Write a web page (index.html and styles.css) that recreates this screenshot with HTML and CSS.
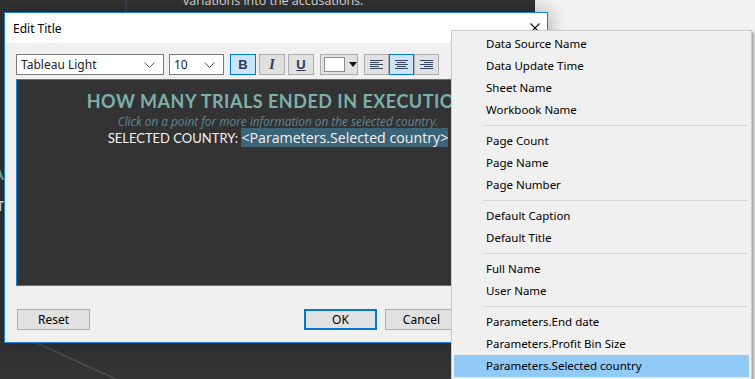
FILE: index.html
```html
<!DOCTYPE html>
<html lang="en">

<head>
    <meta charset="UTF-8">
    <meta name="viewport" content="width=device-width, initial-scale=1.0">
    <title>Edit Title</title>
    <link rel="stylesheet" href="styles.css">
</head>

<body>

    <!-- Dashboard that sits behind the dialog -->
    <div class="backdrop">
        <div class="dash">
            <div class="dash-edge">
                <span class="edge-title">A</span>
                <span class="edge-text">T</span>
            </div>
            <div class="dash-rule"></div>
            <p class="dash-note">variations into the accusations.</p>
            <svg class="dash-line" width="535" height="379">
                <line x1="26" y1="338" x2="120" y2="381" stroke="#484848" stroke-width="2" />
            </svg>
        </div>
        <div class="side"></div>
    </div>

    <!-- Edit Title dialog -->
    <div class="dialog">
        <div class="title-bar">
            <span>Edit Title</span>
            <svg class="close" width="10" height="10" viewBox="0 0 10 10">
                <path d="M0.5 0.5 L9.5 9.5 M9.5 0.5 L0.5 9.5" stroke="#111" stroke-width="1.1" fill="none" />
            </svg>
        </div>

        <div class="dialog-body">
            <div class="toolbar">
                <div class="select font-select">
                    <span>Tableau Light</span>
                    <svg width="11" height="6" viewBox="0 0 11 6">
                        <path d="M0.5 0.5 L5.5 5.5 L10.5 0.5" stroke="#555" fill="none" />
                    </svg>
                </div>
                <div class="select size-select">
                    <span>10</span>
                    <svg width="11" height="6" viewBox="0 0 11 6">
                        <path d="M0.5 0.5 L5.5 5.5 L10.5 0.5" stroke="#555" fill="none" />
                    </svg>
                </div>

                <div class="style-group">
                    <button class="tool active bold">B</button>
                    <button class="tool italic">I</button>
                    <button class="tool underline">U</button>
                </div>

                <button class="tool color-btn">
                    <span class="swatch"></span>
                    <span class="caret"></span>
                </button>

                <div class="align-group">
                    <button class="tool">
                        <svg width="13" height="9" viewBox="0 0 13 9">
                            <path d="M0 0.5 H13 M0 2.5 H9 M0 4.5 H13 M0 6.5 H9 M0 8.5 H13" stroke="#3b4660" />
                        </svg>
                    </button>
                    <button class="tool active">
                        <svg width="13" height="9" viewBox="0 0 13 9">
                            <path d="M0 0.5 H13 M2 2.5 H11 M0 4.5 H13 M2 6.5 H11 M0 8.5 H13" stroke="#3b4660" />
                        </svg>
                    </button>
                    <button class="tool">
                        <svg width="13" height="9" viewBox="0 0 13 9">
                            <path d="M0 0.5 H13 M4 2.5 H13 M0 4.5 H13 M4 6.5 H13 M0 8.5 H13" stroke="#3b4660" />
                        </svg>
                    </button>
                </div>
            </div>

            <!-- Title text editor -->
            <div class="editor">
                <div class="title-line">HOW MANY TRIALS ENDED IN EXECUTION</div>
                <div class="sub-line">Click on a point for more information on the selected country.</div>
                <div class="country-line">SELECTED COUNTRY: <span class="param">&lt;Parameters.Selected country&gt;</span></div>
            </div>

            <div class="footer">
                <button class="btn">Reset</button>
                <div class="footer-right">
                    <button class="btn primary">OK</button>
                    <button class="btn">Cancel</button>
                    <button class="btn">Apply</button>
                </div>
            </div>
        </div>
    </div>

    <!-- Insert menu -->
    <ul class="menu">
        <li>Data Source Name</li>
        <li>Data Update Time</li>
        <li>Sheet Name</li>
        <li>Workbook Name</li>
        <li class="sep"></li>
        <li>Page Count</li>
        <li>Page Name</li>
        <li>Page Number</li>
        <li class="sep"></li>
        <li>Default Caption</li>
        <li>Default Title</li>
        <li class="sep"></li>
        <li>Full Name</li>
        <li>User Name</li>
        <li class="sep"></li>
        <li>Parameters.End date</li>
        <li>Parameters.Profit Bin Size</li>
        <li class="hover">Parameters.Selected country</li>
    </ul>

</body>

</html>
```

FILE: styles.css
```css
* {
    margin: 0;
    padding: 0;
    box-sizing: border-box;
}

body {
    width: 755px;
    height: 379px;
    overflow: hidden;
    font-family: "Noto Sans", "Open Sans", sans-serif;
    font-size: 12px;
    color: #000;
    position: relative;
}

/* Background dashboard */
.backdrop {
    display: flex;
    height: 379px;
}

.dash {
    width: 535px;
    background-color: #333;
    display: flex;
    align-items: flex-start;
    position: relative;
}

.dash-edge {
    width: 4px;
    overflow: hidden;
    display: flex;
    flex-direction: column;
    align-items: flex-end;
    padding-top: 164px;
    font-family: Lato, sans-serif;
    font-weight: bold;
}

.edge-title {
    color: #7bb0ab;
    font-size: 17px;
    line-height: 20px;
}

.edge-text {
    color: #e6e6e6;
    font-size: 13px;
    margin-top: 14px;
}

.dash-rule {
    width: 2px;
    height: 40px;
    margin-left: 121px;
    background-color: #3b4252;
}

.dash-note {
    margin-left: 56px;
    margin-top: -6px;
    font-family: "Open Sans", sans-serif;
    font-size: 12.5px;
    line-height: 14px;
    color: #dedede;
    white-space: nowrap;
}

.dash-line {
    position: absolute;
    left: 0;
    top: 0;
}

.side {
    flex: 1;
    background-color: #f2f2f2;
}

/* Dialog */
.dialog {
    position: absolute;
    left: 4px;
    top: 12px;
    width: 544px;
    height: 331px;
    border: 1px solid #1883d7;
    background-color: #f0f0f0;
    box-shadow: 0 0 18px rgba(0, 0, 0, 0.35);
    display: flex;
    flex-direction: column;
}

.title-bar {
    height: 30px;
    background-color: #fff;
    display: flex;
    align-items: center;
    justify-content: space-between;
    padding: 0 7px 0 8px;
}

.dialog-body {
    flex: 1;
    padding: 11px 11px 0 11px;
    display: flex;
    flex-direction: column;
}

.toolbar {
    display: flex;
    height: 21px;
}

.select {
    height: 21px;
    background-color: #fff;
    border: 1px solid #7a7a7a;
    display: flex;
    align-items: center;
    justify-content: space-between;
    padding: 0 8px 0 4px;
    color: #222;
}

.font-select {
    width: 148px;
}

.size-select {
    width: 55px;
    margin-left: 5px;
}

.tool {
    width: 26px;
    height: 21px;
    background-color: #e1e1e1;
    border: 1px solid #adadad;
    display: flex;
    align-items: center;
    justify-content: center;
    color: #2f3a55;
    font-family: "Liberation Sans", Arial, sans-serif;
    font-size: 13px;
    font-weight: bold;
}

.tool.active {
    background-color: #cce4f7;
    border-color: #0078d7;
}

.style-group {
    display: flex;
    gap: 3px;
    margin-left: 6px;
}

.italic {
    font-family: "Liberation Serif", serif;
    font-style: italic;
    font-size: 14px;
}

.underline {
    text-decoration: underline;
}

.color-btn {
    width: 38px;
    margin-left: 6px;
    justify-content: flex-start;
    padding-left: 3px;
}

.swatch {
    width: 22px;
    height: 15px;
    background-color: #fff;
    border: 1px solid #8c8c8c;
}

.caret {
    margin-left: 4px;
    width: 0;
    height: 0;
    border-left: 4px solid transparent;
    border-right: 4px solid transparent;
    border-top: 5px solid #111;
}

.align-group {
    display: flex;
    margin-left: 6px;
}

.align-group .tool {
    width: 25px;
}

/* Title editor */
.editor {
    margin-top: 4px;
    height: 207px;
    background-color: #333;
    border: 1px solid #1883d7;
    text-align: center;
    padding-top: 9px;
    padding-left: 4px;
    white-space: nowrap;
    overflow: hidden;
}

.title-line {
    font-family: Lato, sans-serif;
    font-weight: bold;
    font-size: 18px;
    line-height: 24px;
    letter-spacing: 0.5px;
    color: #7bb0ab;
}

.sub-line {
    font-family: "Open Sans", sans-serif;
    font-style: italic;
    font-size: 11.8px;
    line-height: 16px;
    color: #5f8797;
}

.country-line {
    font-family: Lato, sans-serif;
    font-size: 13px;
    line-height: 18px;
    color: #f2f2f2;
}

.param {
    font-family: "Open Sans", sans-serif;
    font-size: 14.2px;
    background-color: #3c6478;
    padding: 0;
}

/* Dialog buttons */
.footer {
    display: flex;
    margin-top: 23px;
    padding-left: 1px;
    margin-right: -3px;
}

.footer-right {
    margin-left: auto;
    display: flex;
    gap: 8px;
}

.btn {
    width: 73px;
    height: 21px;
    background-color: #e1e1e1;
    border: 1px solid #adadad;
    font-family: "Noto Sans", sans-serif;
    font-size: 12px;
    color: #000;
}

.btn.primary {
    border: 2px solid #0078d7;
}

/* Context menu */
.menu {
    position: absolute;
    left: 451px;
    top: 30px;
    width: 301px;
    list-style: none;
    background-color: #f0f0f0;
    border: 1px solid #cccccc;
    padding: 2px;
    box-shadow: 2px 2px 3px rgba(0, 0, 0, 0.35);
    font-size: 11.5px;
}

.menu li {
    height: 22px;
    line-height: 22px;
    padding-left: 32px;
    white-space: nowrap;
}

.menu li.sep {
    height: 1px;
    padding: 0;
    margin: 4px 0 4px 28px;
    background-color: #d7d7d7;
}

.menu li.hover {
    background-color: #91c9f7;
}
```
